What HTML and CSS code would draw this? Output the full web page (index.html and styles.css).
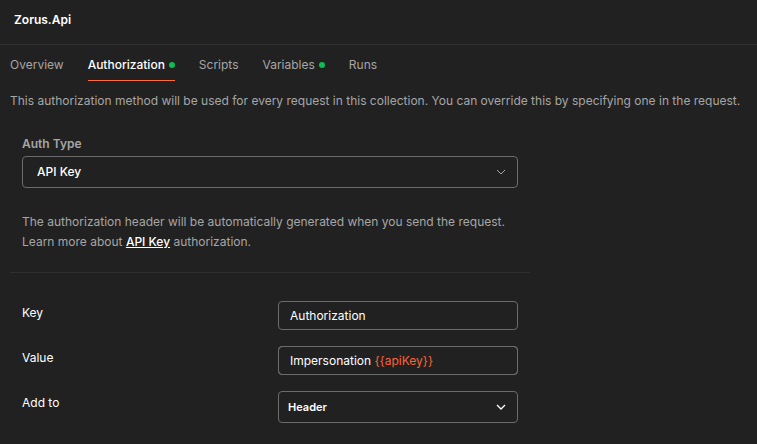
FILE: index.html
```html
<!DOCTYPE html>
<html lang="en">
	<head>
		<meta charset="utf-8">
		<meta name="viewport" content="width=device-width, initial-scale=1">
		<title>Zorus.Api</title>
		<link rel="stylesheet" href="styles.css">
	</head>
	<body>
		<header class="header">
			<h1>Zorus.Api</h1>
		</header>
		<nav class="tabs">
			<a href="#overview">Overview</a>
			<a href="#authorization" class="active">Authorization<span class="dot"></span></a>
			<a href="#scripts">Scripts</a>
			<a href="#variables">Variables<span class="dot"></span></a>
			<a href="#runs">Runs</a>
		</nav>
		<main class="content">
			<p class="intro">This authorization method will be used for every request in this collection. You can override this by specifying one in the request.</p>
			<form class="auth">
				<section class="auth-type">
					<label for="authType">Auth Type</label>
					<div class="select muted">
						<select id="authType">
							<option>API Key</option>
						</select>
						<svg width="16" height="16" viewBox="0 0 16 16" fill="none" stroke="currentColor">
							<path d="M4 6l4 4 4-4"/>
						</svg>
					</div>
					<div class="help">
						<p>The authorization header will be automatically generated when you send the request.</p>
						<p>Learn more about <a href="#api-key">API Key</a> authorization.</p>
					</div>
				</section>
				<section class="fields">
					<div class="row">
						<label for="key">Key</label>
						<input type="text" id="key" class="box" value="Authorization">
					</div>
					<div class="row">
						<label for="value">Value</label>
						<!-- the highlighted copy sits under the input, whose own text is transparent -->
						<div class="highlight">
							<div class="box" aria-hidden="true">Impersonation <span class="variable">{{apiKey}}</span></div>
							<input type="text" id="value" class="box" value="Impersonation {{apiKey}}">
						</div>
					</div>
					<div class="row">
						<label for="addTo">Add to</label>
						<div class="select small">
							<select id="addTo">
								<option>Header</option>
								<option>Query Params</option>
							</select>
							<svg width="16" height="16" viewBox="0 0 16 16" fill="none" stroke="currentColor">
								<path d="M4 6l4 4 4-4" stroke-width="1.3"/>
							</svg>
						</div>
					</div>
				</section>
			</form>
		</main>
	</body>
</html>
```

FILE: styles.css
```css
* {
	box-sizing: border-box;
}
body {
	margin: 0;
	background-color: #212121;
	color: #fff;
	font-family: Inter, "Liberation Sans", sans-serif;
	font-size: 12px;
	line-height: 20px;
}
h1, p {
	margin: 0;
}
h1 {
	font-size: 12px;
	font-weight: 600;
}
.header {
	padding: 10px 14px 14px;
	border-bottom: 1px solid #303030;
}
.tabs {
	display: flex;
	gap: 24px;
	padding: 0 10px;
}
.tabs a {
	display: flex;
	align-items: center;
	gap: 4px;
	height: 36px;
	padding-top: 4px;
	border-bottom: 1px solid transparent;
	color: #a6a6a6;
	text-decoration: none;
}
.tabs a.active {
	border-color: #ff6c37;
	color: #fff;
	font-weight: 500;
}
.dot {
	width: 6px;
	height: 6px;
	border-radius: 50%;
	background-color: #0cbb52;
}
.content {
	padding: 10px;
}
.intro, .help {
	color: #a6a6a6;
}
.auth {
	max-width: 520px;
}
.auth-type {
	padding: 23px 12px 20px;
	border-bottom: 1px solid #303030;
}
.auth-type label {
	display: block;
	margin-bottom: 2px;
	color: #a6a6a6;
	font-weight: 600;
}
.help {
	margin-top: 24px;
}
.help a {
	color: #fff;
	font-weight: 500;
}
.select, .highlight {
	display: grid;
	align-items: center;
}
.select > *, .highlight > * {
	grid-area: 1 / 1;
}
.select svg {
	justify-self: end;
	margin-right: 9px;
	pointer-events: none;
}
.muted svg {
	color: #a6a6a6;
}
select, .box {
	width: 100%;
	border: 1px solid #6b6b6b;
	border-radius: 4px;
	background-color: transparent;
	color: #fff;
	font: inherit;
}
select {
	appearance: none;
	height: 32px;
	padding: 0 14px;
	font-weight: 500;
}
.small select {
	padding: 0 9px;
	font-size: 11px;
	font-weight: 600;
}
option {
	background-color: #212121;
}
.box {
	height: 29px;
	padding: 4px 11px;
}
.highlight input {
	color: transparent;
	caret-color: #fff;
}
.variable {
	color: #ff6135;
}
.fields {
	display: grid;
	gap: 16px;
	padding: 28px 12px 10px;
}
.row {
	display: grid;
	grid-template-columns: 256px 1fr;
	align-items: start;
}
.row label {
	padding-top: 2px;
}
```
